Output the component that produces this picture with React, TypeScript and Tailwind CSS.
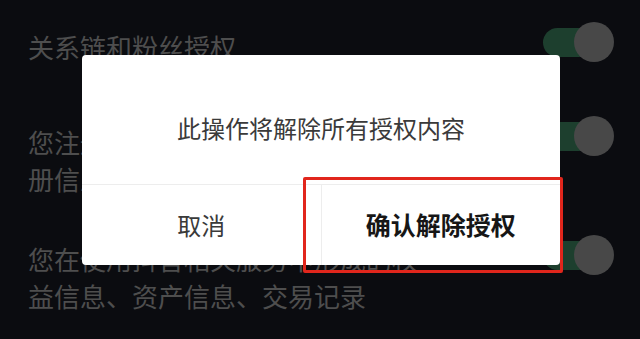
import React from 'react';

const font = { fontFamily: '"Noto Sans CJK SC", "Noto Sans", sans-serif' };

const Toggle: React.FC = () => (
    <div className="relative w-[71px] h-[40px] flex-shrink-0 flex items-center">
        <div className="w-[50px] h-[29px] rounded-full bg-[#1d3f2e]" />
        <div className="absolute right-0 top-0 w-[40px] h-[40px] rounded-full bg-[#484848]" />
    </div>
);

export default function App() {
    return (
        <div className="relative w-[640px] h-[339px] overflow-hidden bg-[#0b0c10]" style={font}>
            {/* settings list behind the dialog */}
            <div className="flex flex-col pl-[28px] pr-[26px] text-[26px] leading-[37px] text-[#4e4e4e]">
                <div className="flex items-start justify-between pt-[22px]">
                    <p className="mt-[6px]">关系链和粉丝授权</p>
                    <Toggle />
                </div>
                <div className="flex items-start justify-between mt-[51px]">
                    <p className="mt-[7px]">
                        您注册抖音时填写的昵称、手机号等注
                        <br />
                        册信息
                    </p>
                    <Toggle />
                </div>
                <div className="flex items-start justify-between mt-[38px]">
                    <p className="mt-[5px]">
                        您在使用抖音相关服务中形成的权
                        <br />
                        益信息、资产信息、交易记录
                    </p>
                    <Toggle />
                </div>
            </div>

            {/* dialog */}
            <div className="absolute left-[82px] top-[55px] w-[478px] h-[210px] rounded-[4px] bg-white flex flex-col">
                <div className="h-[129px] pt-[57px] text-center text-[24px] leading-[32px] text-[#3a3a3a]">
                    此操作将解除所有授权内容
                </div>
                <div className="flex flex-1 border-t border-[#ededed]">
                    <div className="flex-1 flex items-center justify-center text-[24px] text-[#3a3a3a]">取消</div>
                    <div className="flex-1 flex items-center justify-center border-l border-[#ededed] text-[25px] font-bold text-[#161616]">
                        确认解除授权
                    </div>
                </div>
                <div className="absolute left-[221px] top-[122px] w-[260px] h-[96px] border-[3px] border-[#e1261c] rounded-[2px]" />
            </div>
        </div>
    );
}
